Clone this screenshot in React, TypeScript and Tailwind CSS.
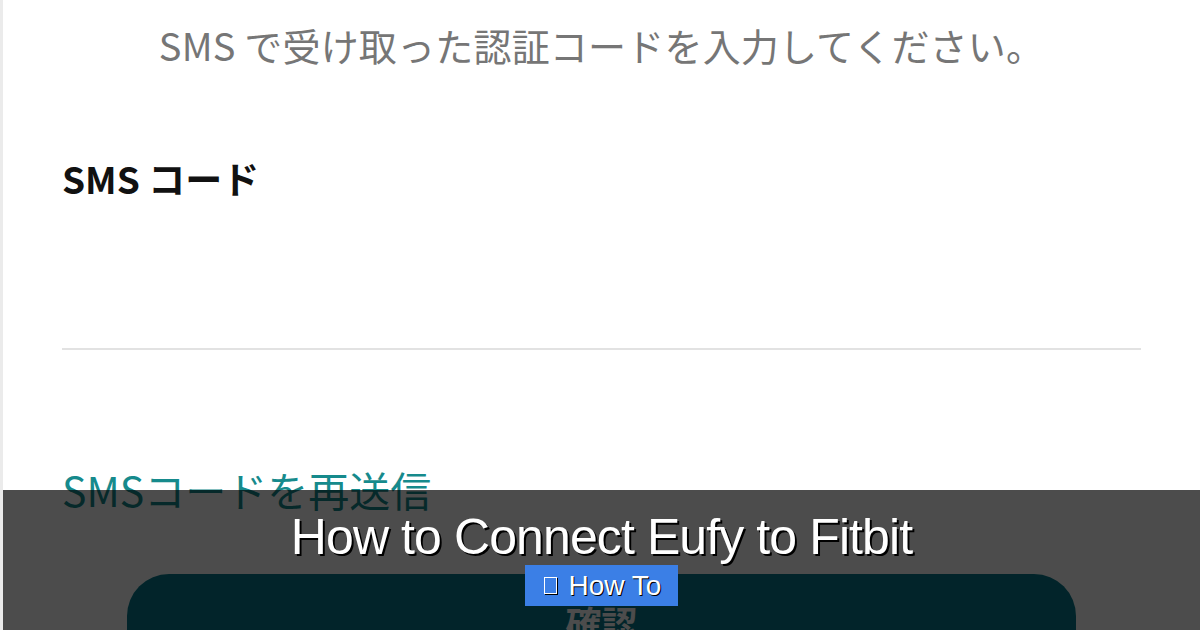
import React from 'react';

const jpFont = { fontFamily: '"Noto Sans CJK JP", "Noto Sans", sans-serif' };

// Caption strip laid over the bottom of the screen
function CaptionBand({ title, tag }: { title: string; tag: string }) {
  return (
    <div className="absolute left-0 right-0 bottom-0 h-[140px] bg-black/70 flex flex-col items-center pt-[19px]">
      <h1
        className="text-white text-[50px] leading-[56px] tracking-[-0.9px] [text-shadow:2px_2px_0_#000]"
        style={{ fontFamily: '"Liberation Sans", Arial, sans-serif' }}
      >
        {title}
      </h1>
      <div
        className="flex items-center gap-[12px] bg-[#3b7fe6] h-[41px] pl-[19px] pr-[17px] text-white text-[28px] [text-shadow:1px_1px_0_#000]"
        style={{ fontFamily: '"Liberation Sans", Arial, sans-serif' }}
      >
        <span className="inline-block w-[13px] h-[17px] border-[1.5px] border-white shadow-[1px_1px_0_#000]" />
        <span>{tag}</span>
      </div>
    </div>
  );
}

export default function App() {
  return (
    <div className="relative w-[1200px] h-[630px] overflow-hidden bg-white border-l-[3px] border-[#ebebeb]" style={jpFont}>
      <div className="flex flex-col pt-[24px] px-[59px]">
        <p className="text-center text-[38px] leading-[42px] tracking-[0.2px] text-[#767676]">
          SMS で受け取った認証コードを入力してください。
        </p>

        <div className="mt-[91px] text-[37px] leading-[42px] font-bold text-[#111]">SMS コード</div>

        {/* input underline */}
        <div className="mt-[149px] h-[2px] bg-[#e2e2e2]" />

        <div className="mt-[116px] text-[41px] leading-[46px] text-[#168a8c]">SMSコードを再送信</div>

        <div className="mt-[62px] mx-[65px] h-[110px] rounded-[42px] bg-[#077b8c] flex justify-center pt-[28px]">
          <span className="text-white text-[36px] leading-[40px] font-bold">確認</span>
        </div>
      </div>

      <CaptionBand title="How to Connect Eufy to Fitbit" tag="How To" />
    </div>
  );
}
